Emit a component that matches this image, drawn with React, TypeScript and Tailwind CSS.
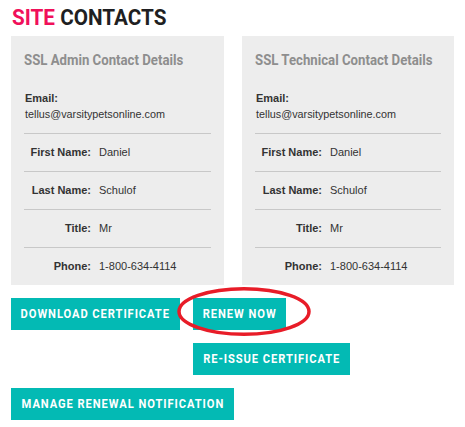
import React from 'react'

const rows = [
    { label: 'First Name:', value: 'Daniel' },
    { label: 'Last Name:', value: 'Schulof' },
    { label: 'Title:', value: 'Mr' },
    { label: 'Phone:', value: '1-800-634-4114' },
]

const ContactCard = ({ title }: { title: string }) => {
    return (
        <div className="bg-[#ededed] px-[13px] font-['Liberation_Sans',Arial,sans-serif] text-[11px] text-[#333]">
            <div className="pt-[14px] h-[34px] leading-[20px] font-['Roboto',sans-serif] font-bold text-[15px] text-[#8e8e8e] whitespace-nowrap">
                <span className="inline-block origin-left scale-x-[0.88]">{title}</span>
            </div>
            <div className="mt-[20px] pb-[11px] pl-[1px]">
                <div className="leading-[16px] font-bold">Email:</div>
                <div className="leading-[16px] text-[10.8px]">tellus@varsitypetsonline.com</div>
            </div>
            {rows.map((r) => (
                <div key={r.label} className="h-[38px] border-t border-[#c8c8c8] flex items-center gap-[8px]">
                    <div className="w-[67px] text-right font-bold">{r.label}</div>
                    <div>{r.value}</div>
                </div>
            ))}
        </div>
    )
}

const Btn = ({ children, className = '' }: { children: React.ReactNode; className?: string }) => (
    <div className={`bg-[#03bab4] text-white h-[32px] flex items-center justify-center font-['Roboto',sans-serif] font-bold text-[12px] tracking-[1px] whitespace-nowrap ${className}`}>
        <span className="inline-block scale-x-[0.93]">{children}</span>
    </div>
)

const App = () => {
    return (
        <div className="w-[465px] h-[427px] bg-white pl-[11px] overflow-hidden">
            <div className="pt-[3px] h-[36px] leading-[28px] font-['Roboto',sans-serif] font-bold text-[22.5px] whitespace-nowrap pl-[1px]">
                <span className="inline-block origin-left scale-x-[0.92]">
                    <span className="text-[#f0105a]">SITE</span> <span className="text-[#1f1f22]">CONTACTS</span>
                </span>
            </div>
            <div className="grid grid-cols-[213px_212px] gap-[18px]">
                <ContactCard title="SSL Admin Contact Details" />
                <ContactCard title="SSL Technical Contact Details" />
            </div>
            <div className="mt-[13px] grid grid-cols-[169px_auto] gap-[13px] items-start">
                <Btn className="w-[169px]">DOWNLOAD CERTIFICATE</Btn>
                <div className="relative justify-self-start">
                    <Btn className="w-[93px]">RENEW NOW</Btn>
                    <svg className="absolute left-[-16px] top-[-11px] overflow-visible pointer-events-none" width="134" height="49" viewBox="0 0 134 49">
                        <ellipse cx="67" cy="24.5" rx="65" ry="22.8" fill="none" stroke="#e81c28" strokeWidth="3.5" />
                    </svg>
                </div>
                <div />
                <Btn className="justify-self-start w-[157px] h-[31px]">RE-ISSUE CERTIFICATE</Btn>
                <Btn className="col-span-2 justify-self-start w-[223px]">MANAGE RENEWAL NOTIFICATION</Btn>
            </div>
        </div>
    )
}

export default App
